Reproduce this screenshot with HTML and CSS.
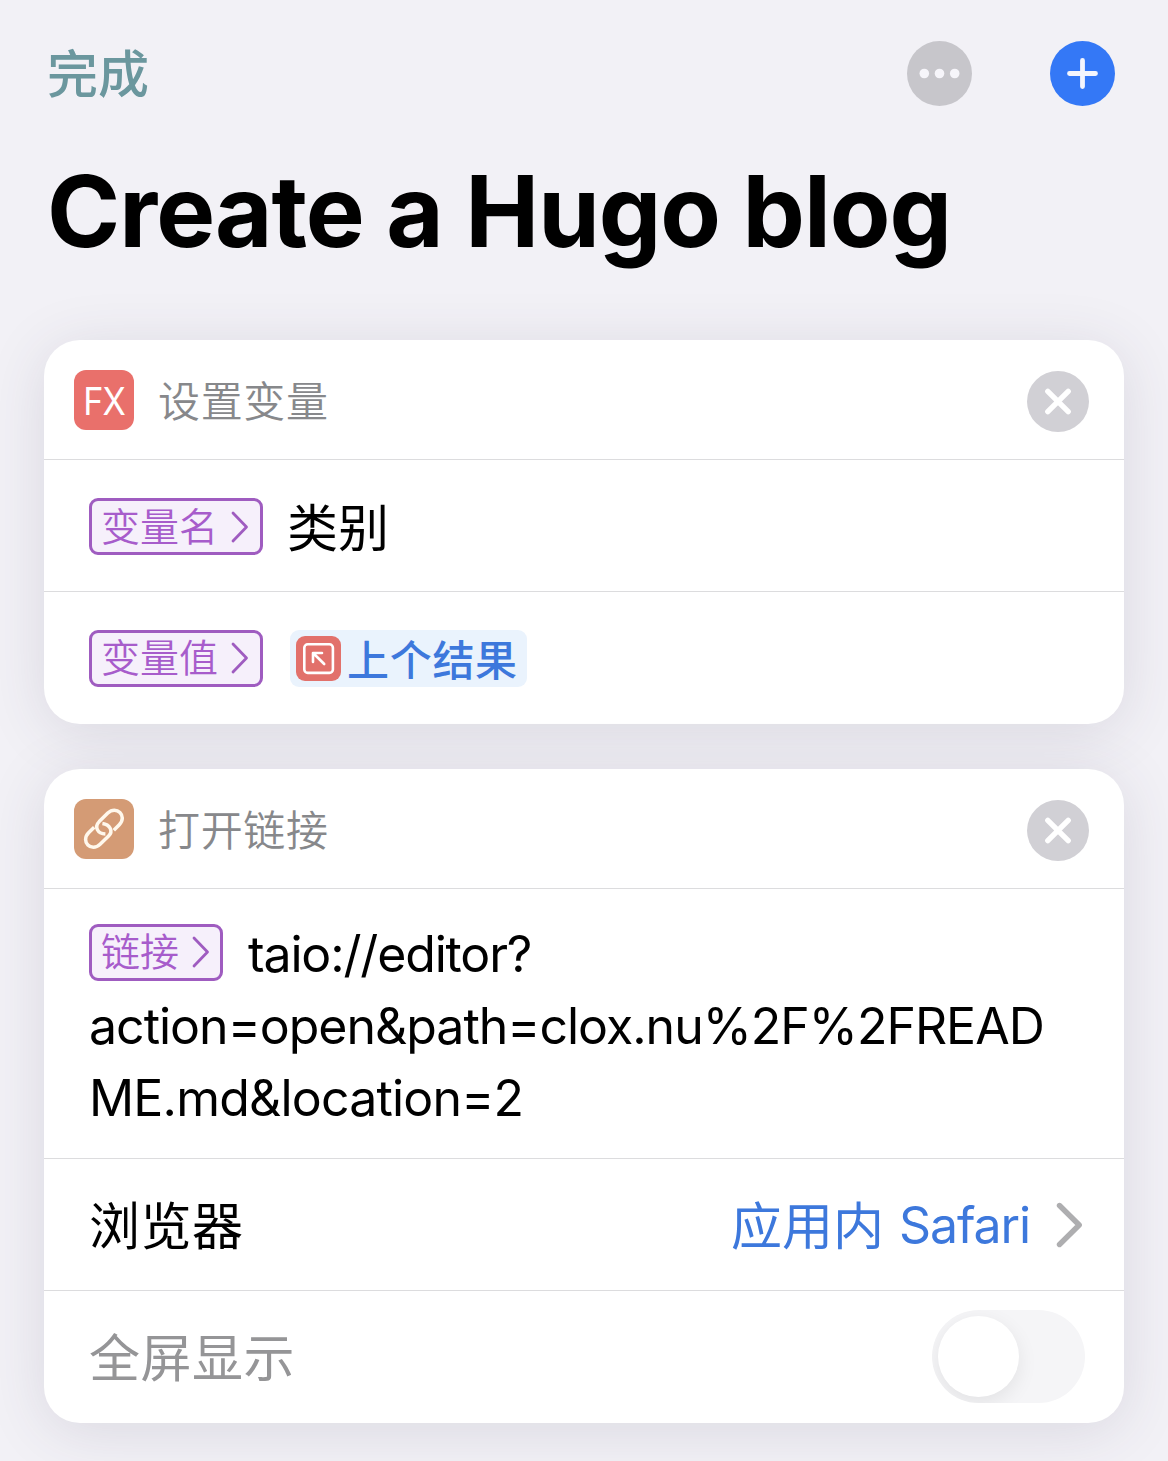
FILE: index.html
```html
<!DOCTYPE html>
<html lang="zh-CN">
<head>
<meta charset="utf-8">
<title>Create a Hugo blog</title>
<link rel="stylesheet" href="styles.css">
</head>
<body>
<header class="topbar">
  <span class="done">完成</span>
  <div class="actions">
    <svg class="round" viewBox="0 0 65 65"><circle cx="32.5" cy="32.5" r="32.5" fill="#c7c6cb"/><g fill="#f6f5fa"><circle cx="17.3" cy="32.5" r="4.8"/><circle cx="32.5" cy="32.5" r="4.8"/><circle cx="47.7" cy="32.5" r="4.8"/></g></svg>
    <svg class="round" viewBox="0 0 65 65"><circle cx="32.5" cy="32.5" r="32.5" fill="#3478f6"/><path d="M19.5 32.5h26M32.5 19.5v26" stroke="#f4f6fd" stroke-width="4.8" stroke-linecap="round"/></svg>
  </div>
</header>
<h1 class="title">Create a Hugo blog</h1>
<main class="cards">
  <section class="card">
    <div class="head">
      <span class="badge badge-fx"><span class="fx">FX</span></span>
      <span class="name">设置变量</span>
      <svg class="close" viewBox="0 0 62 61"><ellipse cx="31" cy="30.5" rx="31" ry="30.5" fill="#d1d0d5"/><path d="M20.8 20.3l20.4 20.4M41.2 20.3L20.8 40.7" stroke="#fff" stroke-width="5.4" stroke-linecap="round"/></svg>
    </div>
    <div class="row row-name">
      <span class="tag"><span>变量名</span><svg class="tag-arrow" viewBox="0 0 18 32"><path d="M2 2l13.5 14L2 30" fill="none" stroke="#9f5cc0" stroke-width="2.8" stroke-linecap="round" stroke-linejoin="round"/></svg></span>
      <span class="value">类别</span>
    </div>
    <div class="row row-last">
      <span class="tag"><span>变量值</span><svg class="tag-arrow" viewBox="0 0 18 32"><path d="M2 2l13.5 14L2 30" fill="none" stroke="#9f5cc0" stroke-width="2.8" stroke-linecap="round" stroke-linejoin="round"/></svg></span>
      <span class="token"><svg class="token-icon" viewBox="0 0 45 45"><rect width="45" height="45" rx="9" fill="#e2716b"/><rect x="8.3" y="8.3" width="28.6" height="28.6" rx="3.5" fill="none" stroke="#fff" stroke-width="2.6"/><path d="M28.2 28L17.3 17.3M17 26V17h9" fill="none" stroke="#fff" stroke-width="2.6" stroke-linecap="round" stroke-linejoin="round"/></svg><span class="token-text">上个结果</span></span>
    </div>
  </section>
  <section class="card">
    <div class="head">
      <span class="badge badge-link"><svg class="link" viewBox="0 0 60 60" fill="none" stroke="#fff8ec" stroke-width="3.5"><path d="M28.4 24.4C35.8 25.4 39.6 32 34.6 37L26.1 45.3C17.2 53.8 6.2 42.4 14.6 33.8L20.2 28.2"/><path d="M31.4 35.1C23.6 34.8 20 28 25.2 22.6L33.8 14.1C42.3 5.8 53.8 16.7 45.3 25.7L39.8 31.3"/></svg></span>
      <span class="name">打开链接</span>
      <svg class="close" viewBox="0 0 62 61"><ellipse cx="31" cy="30.5" rx="31" ry="30.5" fill="#d1d0d5"/><path d="M20.8 20.3l20.4 20.4M41.2 20.3L20.8 40.7" stroke="#fff" stroke-width="5.4" stroke-linecap="round"/></svg>
    </div>
    <div class="url">
      <div class="url-line"><span class="tag tag-url"><span>链接</span><svg class="tag-arrow" viewBox="0 0 18 32"><path d="M2 2l13.5 14L2 30" fill="none" stroke="#9f5cc0" stroke-width="2.8" stroke-linecap="round" stroke-linejoin="round"/></svg></span><span class="latin first">taio://editor?</span></div>
      <div class="url-line"><span class="latin">action=open&amp;path=clox.nu%2F%2FREAD</span></div>
      <div class="url-line"><span class="latin third">ME.md&amp;location=2</span></div>
    </div>
    <div class="row">
      <span class="label">浏览器</span>
      <span class="choice">应用内</span>
      <span class="safari">Safari</span>
      <svg class="chevron" viewBox="0 0 28 46"><path d="M3.5 3.5L23.2 23 3.5 42.5" fill="none" stroke="#aeaeb0" stroke-width="5.4" stroke-linecap="round" stroke-linejoin="round"/></svg>
    </div>
    <div class="row row-last">
      <span class="label muted">全屏显示</span>
      <span class="switch"><span class="knob"></span></span>
    </div>
  </section>
</main>
</body>
</html>
```
FILE: styles.css
```css
* { box-sizing: border-box; }
body {
  margin: 0;
  height: 1461px;
  overflow: hidden;
  background: #f2f1f6;
  color: #000;
  font-family: Inter, "Noto Sans CJK SC", sans-serif;
}
svg { display: block; flex: none; }
span { white-space: nowrap; }
.topbar {
  display: flex;
  align-items: center;
  justify-content: space-between;
  height: 147px;
  padding: 0 53px 0 47px;
}
.done { padding-top: 2px; font-size: 51px; font-weight: 500; line-height: 60px; color: #6b979e; }
.actions { display: flex; gap: 78px; }
.round { width: 65px; height: 65px; }
.title {
  margin: 0;
  padding: 0 0 0 47px;
  height: 193px;
  font-size: 99px;
  line-height: 129px;
  font-weight: 700;
  letter-spacing: -1px;
  white-space: nowrap;
}
.cards { display: flex; flex-direction: column; gap: 45px; padding: 0 44px; }
.card {
  background: #fff;
  border-radius: 36px;
  box-shadow: 0 8px 60px rgba(60, 55, 85, .13);
}
.head {
  display: flex;
  align-items: center;
  height: 120px;
  padding: 0 35px 0 30px;
  border-bottom: 1px solid #dcdcde;
}
.badge {
  width: 60px;
  height: 60px;
  border-radius: 12px;
  display: flex;
  align-items: center;
  justify-content: center;
  color: #fff;
}
.badge-fx { background: #e9706b; }
.fx { padding-top: 2px; font-size: 38px; font-weight: 400; letter-spacing: -1px; transform: scaleX(.9); }
.badge-link { background: #d49b75; }
.link { width: 60px; height: 60px; }
.name { margin-left: 24px; padding-top: 4px; font-size: 42px; letter-spacing: .67px; line-height: 60px; color: #87888b; font-weight: 350; }
.close { width: 62px; height: 61px; margin: 4px 0 0 auto; }
.row {
  display: flex;
  align-items: center;
  height: 132px;
  padding: 0 39px 0 45px;
  border-bottom: 1px solid #dcdcde;
}
.row-name { padding-top: 2px; }
.row-last { border-bottom: 0; }
.tag {
  display: flex;
  align-items: center;
  height: 57px;
  padding: 0 11px 0 9px;
  border: 3px solid #9f5cc0;
  border-radius: 9px;
  background: #f6f0fb;
  color: #a75ccb;
  font-size: 39px;
  font-weight: 350;
  line-height: 50px;
}
.tag-arrow { width: 18px; height: 32px; margin-left: 13px; }
.tag-url { margin-top: -4px; padding-right: 10px; }
.value { margin-left: 24px; padding-top: 4px; font-size: 51px; line-height: 72px; }
.token {
  display: flex;
  align-items: center;
  height: 57px;
  margin-left: 27px;
  padding: 0 9px 0 6px;
  border-radius: 9px;
  background: #eaf3fd;
  color: #3d78dc;
  font-size: 42px;
  letter-spacing: .7px;
  font-weight: 500;
  line-height: 53px;
}
.token-text { padding-top: 4px; }
.token-icon { width: 45px; height: 45px; margin-right: 6px; }
.url { height: 270px; padding: 29px 45px 0; border-bottom: 1px solid #dcdcde; }
.url-line { display: flex; align-items: center; height: 72px; }
.latin { font-size: 50px; line-height: 72px; letter-spacing: -1px; }
.first { margin-left: 25px; letter-spacing: -1.15px; }
.third { letter-spacing: -.8px; }
.label { padding-top: 4px; font-size: 51px; line-height: 72px; letter-spacing: .5px; }
.muted { color: #959597; }
.choice { margin-left: auto; padding-top: 4px; font-size: 51px; line-height: 72px; color: #3d78dc; }
.safari { margin-left: 15px; font-size: 50px; letter-spacing: -1.1px; color: #3d78dc; }
.chevron { width: 28px; height: 46px; margin: 0 1px 0 26px; }
.switch {
  width: 153px;
  height: 93px;
  margin: -2px 0 0 auto;
  padding: 6px;
  border-radius: 47px;
  background: #f5f5f7;
  overflow: hidden;
}
.knob {
  display: block;
  width: 81px;
  height: 81px;
  border-radius: 50%;
  background: #fff;
  box-shadow: 0 6px 20px rgba(0, 0, 0, .08);
}
```
